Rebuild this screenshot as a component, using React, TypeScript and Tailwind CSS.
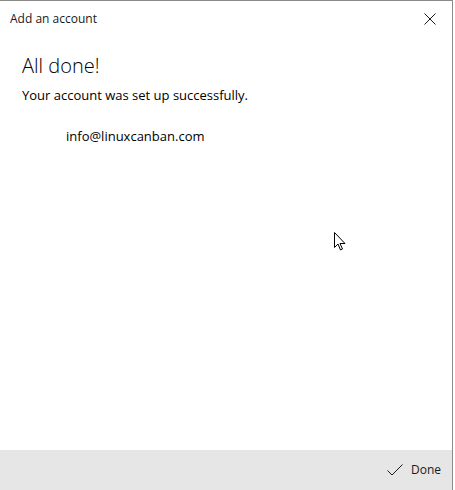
const font = { fontFamily: '"Open Sans", "Noto Sans", Arial, sans-serif' };

function CloseIcon() {
  return (
    <svg width="12" height="12" viewBox="0 0 12 12" className="text-[#1a1a1a]">
      <path d="M0.5 0.5 L11.5 11.5 M11.5 0.5 L0.5 11.5" stroke="currentColor" strokeWidth="1" fill="none" />
    </svg>
  );
}

function CheckIcon() {
  return (
    <svg width="16" height="12" viewBox="0 0 16 12" className="text-[#1a1a1a]">
      <path d="M0.5 6.5 L5 11 L15.5 0.5" stroke="currentColor" strokeWidth="1" fill="none" />
    </svg>
  );
}

function Cursor() {
  return (
    <svg width="13" height="20" viewBox="0 0 13 20" className="absolute left-[334px] top-[232px]">
      <path
        d="M0.5 0.5 L0.5 15.5 L4 12 L6.5 18 L8.5 17 L6 11.5 L11 11.5 Z"
        fill="#fff"
        stroke="#000"
        strokeWidth="1"
        strokeLinejoin="miter"
      />
    </svg>
  );
}

export default function App() {
  return (
    <div className="relative h-[490px] w-[455px] overflow-hidden bg-white" style={font}>
      <div className="flex h-full w-[453px] flex-col border-r border-t border-[#8a8a8a] bg-white">
        {/* title bar */}
        <div className="flex h-[35px] items-center justify-between pl-[10px] pr-[16px]">
          <span className="text-[12px] text-[#1a1a1a]">Add an account</span>
          <CloseIcon />
        </div>

        {/* body */}
        <div className="flex-1 px-[22px] pt-[16px]">
          <h1 className="text-[20px] font-light leading-[28px] text-black">All done!</h1>
          <p className="mt-[6px] text-[13px] leading-[18px] text-black">Your account was set up successfully.</p>
          <p className="mt-[23px] pl-[44px] text-[13px] leading-[18px] text-black">info@linuxcanban.com</p>
        </div>

        {/* footer */}
        <div className="flex h-[40px] items-center justify-end gap-[8px] bg-[#e6e6e6] pr-[11px]">
          <CheckIcon />
          <span className="text-[12px] text-[#1a1a1a]">Done</span>
        </div>
      </div>
      <Cursor />
    </div>
  );
}
